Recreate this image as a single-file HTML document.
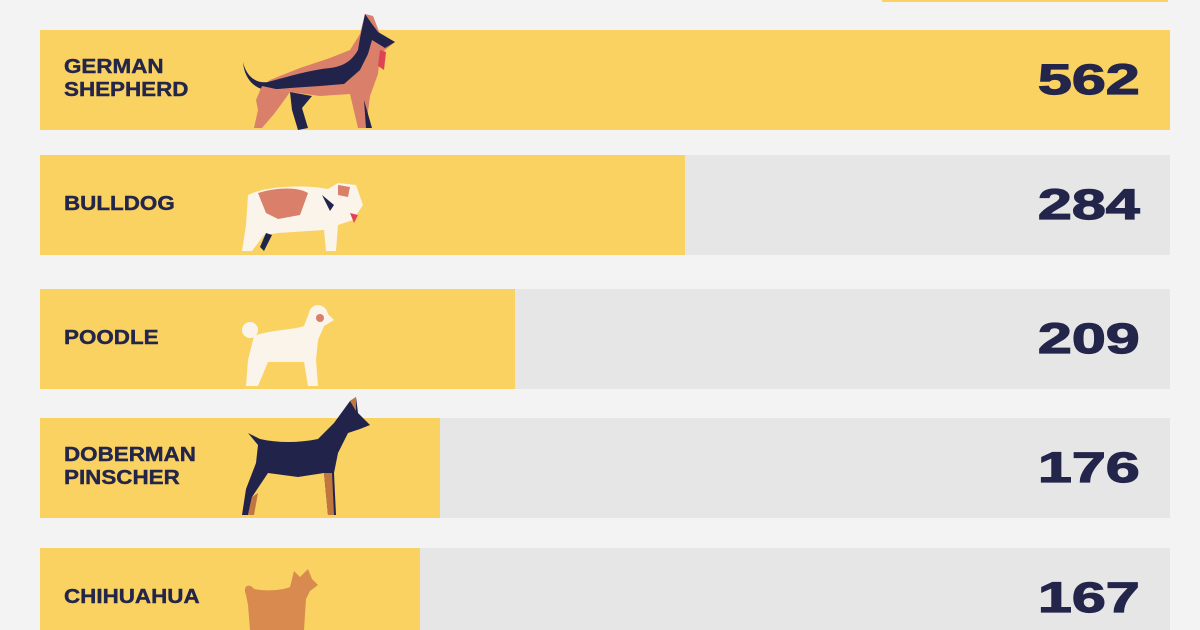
<!DOCTYPE html>
<html style="overflow:hidden;height:630px"><head><style>
html,body{margin:0;padding:0}
body{width:1200px;height:630px;background:#f3f3f3;position:relative;overflow:hidden;font-family:"Liberation Sans",sans-serif;color:#23254a}
.row{position:absolute;left:40px;width:1130px;height:100px;background:#e6e6e6}
.fill{position:absolute;left:0;top:0;height:100%;background:#f9d262}
.lab{position:absolute;left:24px;font-weight:bold;font-size:20px;line-height:23px;transform:scaleX(1.12);transform-origin:left center;top:50%;margin-top:-12px;-webkit-text-stroke:0.4px #23254a}
.lab.two{margin-top:-24px}
.num{position:absolute;right:30px;top:50%;margin-top:-26px;font-weight:900;font-size:43px;line-height:52px;transform:scaleX(1.42);transform-origin:right center;-webkit-text-stroke:1.2px #23254a}
svg{position:absolute}
</style></head><body>
<div style="position:absolute;left:882px;top:0;width:286px;height:2px;background:#f9d262"></div>

<div class="row" style="top:30px"><div class="fill" style="width:1130px"></div>
<div class="lab two">GERMAN<br>SHEPHERD</div><div class="num">562</div></div>
<svg style="left:240px;top:10px" width="160" height="122" viewBox="0 0 160 122">
<path d="M22 76 L50 82 L80 86 L110 84 L118 118 L126 118 L130 86 L138 64 L140 44 L150 36 L155 32 L140 24 L133 6 L125 4 L120 24 L110 40 L90 48 L60 58 L30 70 Z" fill="#d97f6a"/>
<path d="M3 52 C6 66 16 74 28 72 C50 66 70 60 90 58 C105 56 112 50 118 40 L120 28 L125 4 L132 14 L138 22 L155 32 L145 38 L132 30 L128 44 L120 60 L104 74 L80 76 L50 78 L26 80 C12 78 4 66 3 52Z" fill="#22234b"/>
<path d="M50 82 L72 86 L62 98 L68 118 L58 120 L52 100 Z" fill="#22234b"/>
<path d="M22 76 L50 82 L40 96 L34 104 L22 118 L14 118 L18 100 L16 90 Z" fill="#d97f6a"/>
<path d="M124 90 L132 118 L126 118Z" fill="#22234b"/>
<path d="M140 40 L138 56 L144 60 L146 42Z" fill="#e04454"/>
</svg>

<div class="row" style="top:155px"><div class="fill" style="width:645px"></div>
<div class="lab">BULLDOG</div><div class="num">284</div></div>
<svg style="left:238px;top:175px" width="130" height="80" viewBox="0 0 130 80">
<path d="M10 20 C30 10 70 10 90 14 L100 8 L118 10 L125 30 L115 45 L100 50 L98 76 L88 76 L86 55 L40 58 L26 60 L14 76 L4 76 L8 50 Z" fill="#fbf4ea"/>
<path d="M20 18 C40 12 60 12 70 18 L62 40 L40 44 L28 38Z" fill="#d97f6a"/>
<path d="M100 10 L112 12 L110 22 L100 20Z" fill="#d97f6a"/>
<path d="M84 20 L92 36 L96 30Z" fill="#22234b"/>
<path d="M28 58 L22 72 L26 76 L34 60Z" fill="#22234b"/>
<path d="M112 38 L116 48 L120 40Z" fill="#e04454"/>
</svg>

<div class="row" style="top:289px"><div class="fill" style="width:475px"></div>
<div class="lab">POODLE</div><div class="num">209</div></div>
<svg style="left:238px;top:300px" width="100" height="88" viewBox="0 0 100 88">
<circle cx="12" cy="30" r="8" fill="#fbf4ea"/>
<path d="M16 36 C30 30 55 30 66 26 L72 10 C76 2 88 4 90 14 L96 20 L86 26 L80 40 L78 60 L80 86 L70 86 L66 62 L30 62 L20 86 L8 86 L10 60 Z" fill="#fbf4ea"/>
<circle cx="82" cy="18" r="4" fill="#d97f6a"/>
</svg>

<div class="row" style="top:418px"><div class="fill" style="width:400px"></div>
<div class="lab two">DOBERMAN<br>PINSCHER</div><div class="num">176</div></div>
<svg style="left:238px;top:393px" width="140" height="126" viewBox="0 0 140 126">
<path d="M10 40 L22 46 C40 50 60 50 80 46 L96 30 L112 8 L118 4 L120 20 L132 32 L122 36 L110 40 L100 60 L96 80 L98 122 L90 122 L86 80 L60 84 L30 80 L14 104 L10 122 L4 122 L8 96 L18 70 L20 52 Z" fill="#22234b"/>
<path d="M86 80 L90 122 L96 122 L94 80Z M14 104 L10 122 L16 122 L20 100Z M112 8 L118 4 L118 18Z" fill="#c0773f"/>
</svg>

<div class="row" style="top:548px"><div class="fill" style="width:380px"></div>
<div class="lab">CHIHUAHUA</div><div class="num">167</div></div>
<svg style="left:240px;top:565px" width="80" height="65" viewBox="0 0 80 65">
<path d="M6 30 C2 20 10 18 14 24 C24 26 40 26 50 22 L54 6 L60 12 L68 4 L72 14 L78 20 L70 26 L66 34 L64 65 L10 65 L8 40Z" fill="#d98b4f"/>
</svg>
</body></html>
